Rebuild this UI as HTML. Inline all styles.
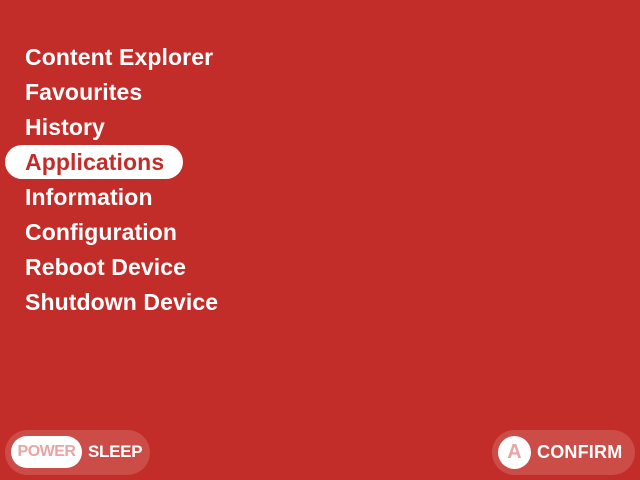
<!DOCTYPE html>
<html><head><style>
body{margin:0;width:640px;height:480px;background:#c32d29;font-family:"Liberation Sans",sans-serif;font-weight:bold;color:#fff;position:relative;overflow:hidden}
.item{position:absolute;left:25px;font-size:23px;letter-spacing:0.1px;line-height:34px;height:34px}
.sel{position:absolute;left:5px;top:145px;width:178px;height:34px;background:#fff;border-radius:17px}
.pill{position:absolute;top:430px;height:45px;border-radius:23px;background:rgba(255,255,255,0.15)}
</style></head><body>
<div class="sel"></div>
<div class="item" style="top:40px">Content Explorer</div>
<div class="item" style="top:75px">Favourites</div>
<div class="item" style="top:110px">History</div>
<div class="item" style="top:145px;color:#c32d29">Applications</div>
<div class="item" style="top:180px">Information</div>
<div class="item" style="top:215px">Configuration</div>
<div class="item" style="top:250px">Reboot Device</div>
<div class="item" style="top:285px">Shutdown Device</div>
<div class="pill" style="left:5px;width:145px"></div>
<div style="position:absolute;left:11px;top:436px;width:71px;height:32px;background:#fff;border-radius:16px;color:#e8a5a3;font-size:16px;line-height:32px;text-align:center;letter-spacing:-0.5px">POWER</div>
<div style="position:absolute;left:88px;top:436px;font-size:17px;line-height:32px;letter-spacing:-0.3px">SLEEP</div>
<div class="pill" style="left:492px;width:143px"></div>
<div style="position:absolute;left:498px;top:436px;width:33px;height:33px;background:#fff;border-radius:50%;color:#e8a5a3;font-size:20px;line-height:33px;text-align:center">A</div>
<div style="position:absolute;left:537px;top:436px;font-size:18px;line-height:33px;letter-spacing:0.2px">CONFIRM</div>
</body></html>
